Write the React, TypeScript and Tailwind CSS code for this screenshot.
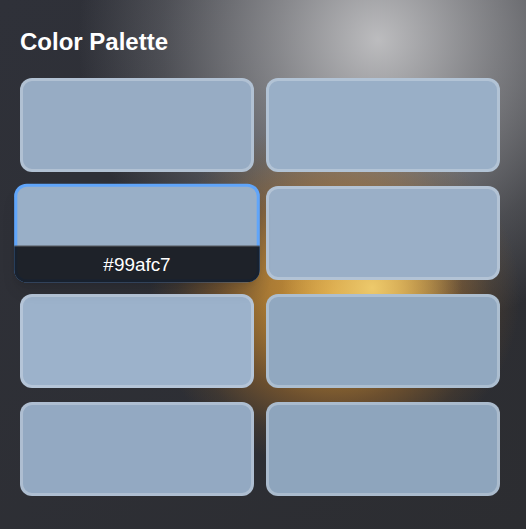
import React from "react";

const colors = [
  "#97acc4",
  "#99afc7",
  "#99afc7",
  "#9aafc7",
  "#9cb2cb",
  "#91a8c0",
  "#93a9c2",
  "#8ea5bd",
];

const bgClasses = [
  "bg-[#97acc4]",
  "bg-[#99afc7]",
  "bg-[#99afc7]",
  "bg-[#9aafc7]",
  "bg-[#9cb2cb]",
  "bg-[#91a8c0]",
  "bg-[#93a9c2]",
  "bg-[#8ea5bd]",
];

export default function App() {
  return (
    <div
      className="min-h-screen w-full pl-5 pt-[26px] font-['Liberation_Sans',Arial,sans-serif] bg-[radial-gradient(circle_90px_at_372px_288px,rgba(240,205,110,0.95)_0%,rgba(235,195,100,0.5)_50%,rgba(235,195,100,0)_100%),radial-gradient(ellipse_185px_175px_at_335px_295px,rgba(215,155,55,0.95)_0%,rgba(200,140,50,0.8)_35%,rgba(170,112,42,0.5)_62%,rgba(140,95,40,0.18)_85%,rgba(140,95,40,0)_100%),radial-gradient(circle_300px_at_378px_40px,rgba(200,200,202,0.92)_0%,rgba(200,200,202,0.58)_33%,rgba(200,200,202,0.2)_72%,rgba(200,200,202,0)_100%),linear-gradient(135deg,#2f3139,#2c2d31)]"
    >
      <h1 className="text-2xl leading-8 font-bold text-white mb-5">Color Palette</h1>
      <div className="grid w-[480px] grid-cols-2 gap-x-[12px] gap-y-[14px]">
        {colors.map((c, i) =>
          i === 2 ? (
            <div
              key={i}
              className="relative h-[94px] scale-105 overflow-hidden rounded-xl bg-[#60a5fa] p-[3px] shadow-lg"
            >
              <div className={`h-full w-full rounded-[9px] ${bgClasses[i]}`} />
              <div className="absolute inset-x-0 bottom-0 flex h-[35px] items-center justify-center border-t border-white/20 bg-[rgba(17,19,23,0.9)] text-lg text-white">
                {c}
              </div>
            </div>
          ) : (
            <div
              key={i}
              className={`h-[94px] rounded-xl border-[3px] border-white/25 ${bgClasses[i]}`}
            />
          )
        )}
      </div>
    </div>
  );
}
